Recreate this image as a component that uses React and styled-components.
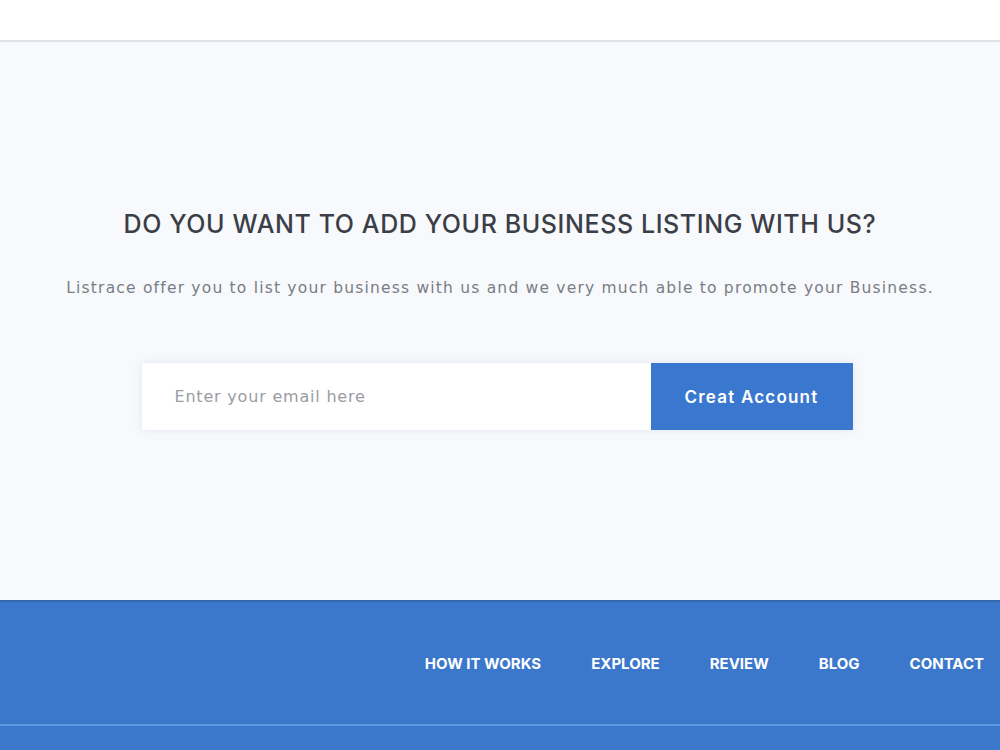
import React from 'react';
import styled, { createGlobalStyle } from 'styled-components';

const GlobalStyle = createGlobalStyle`
  * {
    box-sizing: border-box;
  }

  body {
    margin: 0;
    font-family: Inter, "Noto Sans", sans-serif;
    background-color: #f7f9fc;
  }
`;

const Page = styled.div`
  width: 1000px;
  height: 750px;
  display: flex;
  flex-direction: column;
  overflow: hidden;
`;

const TopBar = styled.header`
  height: 42px;
  background-color: #fff;
  border-bottom: 2px solid #dfe3e9;
  box-shadow: 0 1px 3px rgba(200, 208, 220, 0.6);
`;

const Signup = styled.section`
  height: 558px;
  display: flex;
  flex-direction: column;
  align-items: center;
  padding-top: 167px;
  background-color: #f7f9fc;
`;

const Title = styled.h2`
  margin: 0;
  font-size: 25px;
  font-weight: 500;
  color: #3b3e46;
  letter-spacing: 0.6px;
`;

const Lead = styled.p`
  margin: 40px 0 0;
  font-family: "DejaVu Sans", sans-serif;
  font-size: 15.5px;
  color: #7a7d85;
  letter-spacing: 1.2px;
`;

const Form = styled.form`
  margin: 66px 6px 0 0;
  display: flex;
  width: 711px;
  height: 67px;
  box-shadow: 0 0 8px rgba(216, 224, 234, 0.7);
`;

const EmailInput = styled.input`
  flex: 1;
  border: none;
  outline: none;
  padding: 0 33px;
  font-family: "DejaVu Sans", sans-serif;
  font-size: 16px;
  letter-spacing: 0.8px;
  color: #555;
  background-color: #fff;

  &::placeholder {
    color: #9a9ca3;
  }
`;

const SubmitButton = styled.button`
  width: 202px;
  border: none;
  font-family: inherit;
  font-size: 17px;
  font-weight: 600;
  letter-spacing: 1.2px;
  color: #fff;
  background-color: #3a78cf;
  cursor: pointer;
`;

const Footer = styled.footer`
  flex: 1;
  background-color: #3b78cc;
  border-top: 2px solid #3668b0;
  display: flex;
  flex-direction: column;
`;

const Nav = styled.nav`
  height: 124px;
  display: flex;
  justify-content: flex-end;
  align-items: center;
  gap: 50px;
  padding-right: 16px;
  border-bottom: 2px solid #5f9be3;
`;

const NavLink = styled.a`
  font-size: 15px;
  font-weight: 700;
  color: #fff;
  text-decoration: none;
`;

const links = ['HOW IT WORKS', 'EXPLORE', 'REVIEW', 'BLOG', 'CONTACT'];

function App() {
  return (
    <Page>
      <GlobalStyle />
      <TopBar />
      <Signup>
        <Title>DO YOU WANT TO ADD YOUR BUSINESS LISTING WITH US?</Title>
        <Lead>
          Listrace offer you to list your business with us and we very much
          able to promote your Business.
        </Lead>
        <Form onSubmit={(e) => e.preventDefault()}>
          <EmailInput type="email" placeholder="Enter your email here" />
          <SubmitButton type="submit">Creat Account</SubmitButton>
        </Form>
      </Signup>
      <Footer>
        <Nav>
          {links.map((link) => (
            <NavLink key={link} href="#">
              {link}
            </NavLink>
          ))}
        </Nav>
      </Footer>
    </Page>
  );
}

export default App;
